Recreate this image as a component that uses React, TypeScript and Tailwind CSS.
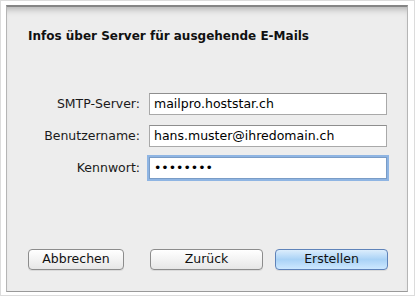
const font = { fontFamily: '"DejaVu Sans", "Liberation Sans", sans-serif' };

function Field({ label, value, focused }: { label: string; value: string; focused?: boolean }) {
  return (
    <div className="flex items-center">
      <label className="w-[121px] pr-[9px] text-right text-[12.5px] text-[#1a1a1a]">{label}</label>
      <div
        className={
          focused
            ? 'h-[22px] w-[238px] bg-white border border-[#7a9cc6] shadow-[0_0_0_2px_#8fb5e3] flex items-center px-[4px] text-[12.5px] text-black'
            : 'h-[22px] w-[238px] bg-white border border-[#a9a9a9] border-t-[#8e8e8e] flex items-center px-[4px] text-[12.5px] text-black'
        }
      >
        {value}
      </div>
    </div>
  );
}

function Button({ label, primary, width }: { label: string; primary?: boolean; width: string }) {
  return (
    <button
      className={
        (primary
          ? 'bg-gradient-to-b from-[#dcedfc] via-[#a9d2f6] to-[#cde8ff] border-[#5f83b9] '
          : 'bg-gradient-to-b from-white via-[#f3f3f3] to-[#e6e6e6] border-[#8c8c8c] ') +
        width +
        ' h-[21px] rounded-[4px] border text-[12.5px] text-[#111] leading-none shadow-[0_1px_0_rgba(0,0,0,0.08)]'
      }
    >
      {label}
    </button>
  );
}

export default function App() {
  return (
    <div className="w-[415px] h-[296px] bg-white border border-[#dcdcdc] pl-[5px] pr-[6px] pt-[4px] pb-[3px]" style={font}>
      <div className="h-full bg-[#ededed] border-t-2 border-t-[#858585] border-x border-x-[#b5b5b5] border-b border-b-[#9a9a9a] shadow-[inset_0_7px_7px_-5px_rgba(0,0,0,0.28)] flex flex-col">
        <h1 className="pl-[21px] pt-[20px] text-[12px] leading-[18px] font-bold text-[#111]">Infos über Server für ausgehende E-Mails</h1>

        <div className="mt-[48px] pl-[21px] flex flex-col gap-[10px]">
          <Field label="SMTP-Server:" value="mailpro.hoststar.ch" />
          <Field label="Benutzername:" value="hans.muster@ihredomain.ch" />
          <Field label="Kennwort:" value="••••••••" focused />
        </div>

        <div className="mt-auto mb-[21px] pl-[21px] flex items-center">
          <Button label="Abbrechen" width="w-[96px]" />
          <Button label="Zurück" width="w-[113px] ml-[26px]" />
          <Button label="Erstellen" width="w-[113px] ml-[12px]" primary />
        </div>
      </div>
    </div>
  );
}
